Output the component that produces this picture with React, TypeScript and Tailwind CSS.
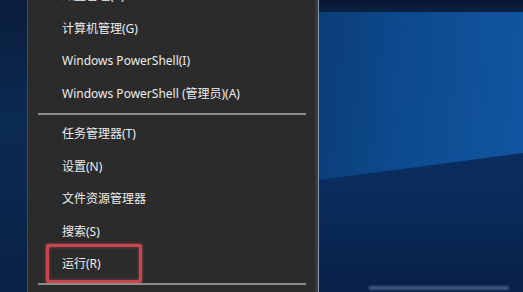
import React from "react";

const font = { fontFamily: '"Noto Sans", "Noto Sans CJK SC", sans-serif' };

function Item({ label, highlight }: { label: string; highlight?: boolean }) {
  return (
    <div className="relative h-[32.5px] flex items-center pl-[34px] text-[12px] text-[#ececec] whitespace-nowrap">
      <span>{label}</span>
      {highlight && (
        <div className="absolute left-[18px] top-[-4px] w-[96px] h-[39px] border-[3px] border-[#c8474e] rounded-[2px] shadow-[0_0_3px_rgba(230,90,100,0.7),inset_0_0_3px_rgba(230,90,100,0.6)]" />
      )}
    </div>
  );
}

export default function App() {
  return (
    <div className="w-[523px] h-[292px] flex overflow-hidden bg-[#0a2246]" style={font}>
      <div className="w-[27px] h-full bg-[linear-gradient(180deg,#0a1d3c_0%,#0b2a52_40%,#0a2347_100%)]" />
      <div className="w-[291px] h-full bg-[#2b2b2b] border-l border-[#4a4a4a] border-r-[3px] border-r-[#3a3a3a] flex flex-col">
        <div className="mt-[-20px] flex flex-col">
          <Item label="磁盘管理(K)" />
          <Item label="计算机管理(G)" />
          <Item label="Windows PowerShell(I)" />
          <Item label="Windows PowerShell (管理员)(A)" />
          <div className="h-[8px] relative">
            <div className="absolute left-[10px] right-[9px] top-[3px] h-[2px] bg-[#8c8c8c]" />
          </div>
          <Item label="任务管理器(T)" />
          <Item label="设置(N)" />
          <Item label="文件资源管理器" />
          <Item label="搜索(S)" />
          <Item label="运行(R)" highlight />
          <div className="h-[8px] relative">
            <div className="absolute left-[10px] right-[9px] top-[2px] h-[2px] bg-[#8c8c8c]" />
          </div>
        </div>
      </div>
      <div className="w-px h-full bg-[#8a9bb0]" />
      <div className="flex-1 h-full flex flex-col">
        <div className="h-[12px] bg-[linear-gradient(180deg,#07152c_0%,#0a2244_100%)]" />
        <div className="flex-1 relative overflow-hidden bg-[linear-gradient(95deg,#0b3d78_0%,#0d4a8e_40%,#1157a2_100%)]">
          <div className="absolute inset-0 bg-[#0a2d5e] [clip-path:polygon(0_168px,100%_141px,100%_100%,0_100%)]" />
          <div className="absolute inset-0 bg-[linear-gradient(180deg,transparent_60%,rgba(5,20,50,0.5)_100%)]" />
          <div className="absolute left-[50px] bottom-[2px] w-[140px] h-[4px] bg-[#8fa6c4] opacity-40 blur-[1px]" />
        </div>
      </div>
    </div>
  );
}
